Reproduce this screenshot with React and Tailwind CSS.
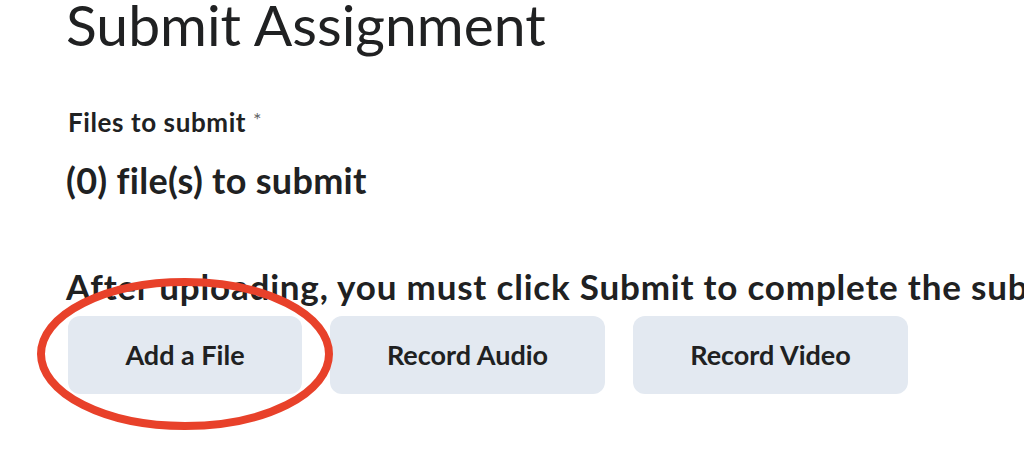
export default function App() {
  const font = { fontFamily: "Lato, 'Noto Sans', sans-serif" };
  return (
    <div className="w-[1024px] h-[472px] overflow-hidden bg-white text-[#202122]" style={font}>
      <div className="pl-[66px]">
        <h1 className="text-[57px] leading-[57px] font-normal -mt-[4px] whitespace-nowrap">Submit Assignment</h1>

        <div className="mt-[56px] flex items-start gap-[7px]">
          <span className="text-[26px] leading-[26px] font-bold pl-[2px] tracking-[0.6px]">Files to submit</span>
          <span className="text-[20px] leading-[20px] text-[#5f6366]">*</span>
        </div>

        <p className="mt-[27px] text-[36px] leading-[36px] font-bold tracking-[0.3px]">(0) file(s) to submit</p>

        <div className="relative mt-[71px]">
          <p className="whitespace-nowrap text-[35px] leading-[35px] font-bold tracking-[0.8px]">
            After uploading, you must click Submit to complete the submission.
          </p>

          <div className="mt-[12px] flex gap-[28px] pl-[2px]">
            <button className="w-[234px] h-[78px] rounded-[12px] bg-[#e3e9f1] text-[27px] font-bold text-[#202122]">
              Add a File
            </button>
            <button className="w-[275px] h-[78px] rounded-[12px] bg-[#e3e9f1] text-[27px] font-bold text-[#202122]">
              Record Audio
            </button>
            <button className="w-[275px] h-[78px] rounded-[12px] bg-[#e3e9f1] text-[27px] font-bold text-[#202122]">
              Record Video
            </button>
          </div>

          <svg
            className="absolute left-[-29px] top-[9px] pointer-events-none"
            width="296"
            height="152"
            viewBox="0 0 296 152"
          >
            <ellipse cx="148" cy="76" rx="144" ry="72" fill="none" stroke="#e8412a" strokeWidth="8" />
          </svg>
        </div>
      </div>
    </div>
  );
}
